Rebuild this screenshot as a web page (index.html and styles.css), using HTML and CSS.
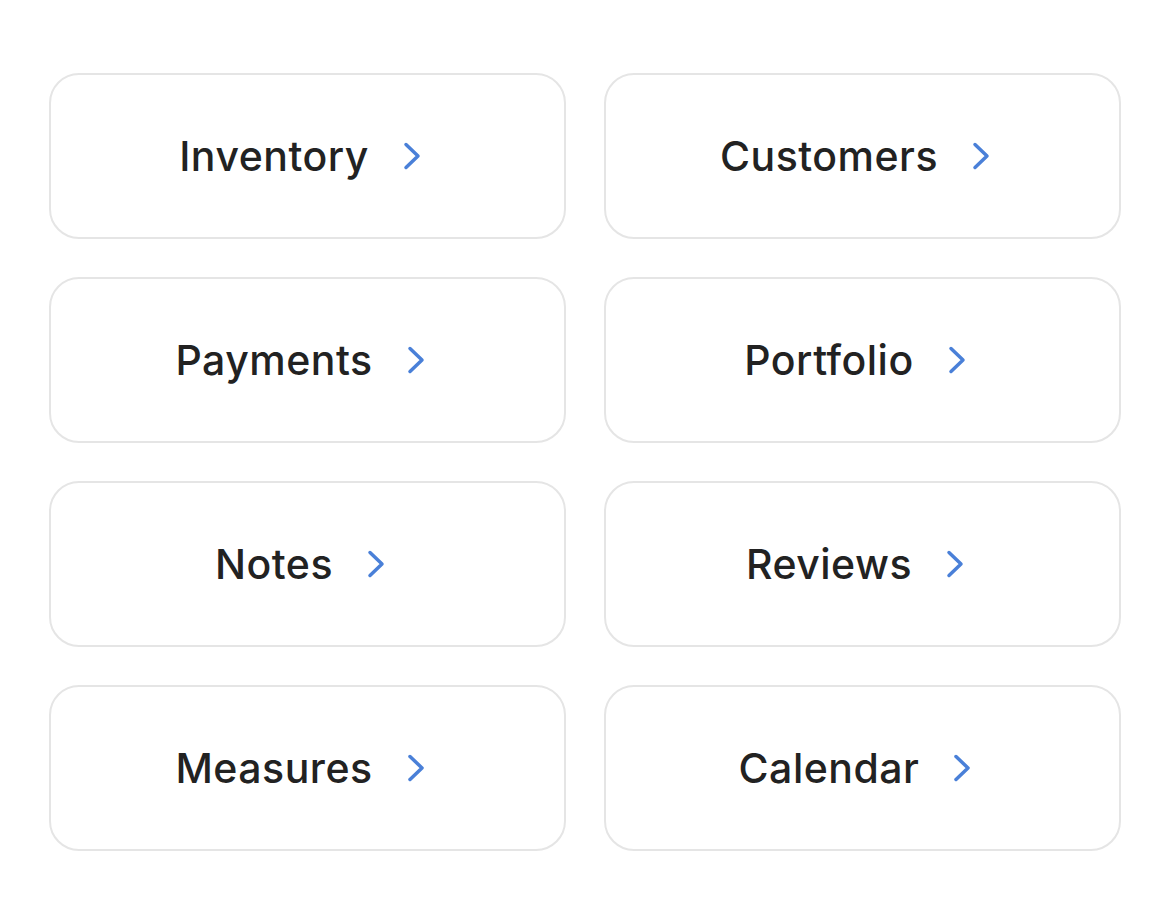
FILE: index.html
```html
<!DOCTYPE html>
<html>
<head>
<meta charset="utf-8">
<link rel="stylesheet" href="styles.css">
</head>
<body>
<div class="grid">
  <a class="card"><span class="label">Inventory</span><svg class="chev" viewBox="0 0 40 40"><path d="M10 8.5 L22 20 L10 31.5"/></svg></a>
  <a class="card"><span class="label">Customers</span><svg class="chev" viewBox="0 0 40 40"><path d="M10 8.5 L22 20 L10 31.5"/></svg></a>
  <a class="card"><span class="label">Payments</span><svg class="chev" viewBox="0 0 40 40"><path d="M10 8.5 L22 20 L10 31.5"/></svg></a>
  <a class="card"><span class="label">Portfolio</span><svg class="chev" viewBox="0 0 40 40"><path d="M10 8.5 L22 20 L10 31.5"/></svg></a>
  <a class="card"><span class="label">Notes</span><svg class="chev" viewBox="0 0 40 40"><path d="M10 8.5 L22 20 L10 31.5"/></svg></a>
  <a class="card"><span class="label">Reviews</span><svg class="chev" viewBox="0 0 40 40"><path d="M10 8.5 L22 20 L10 31.5"/></svg></a>
  <a class="card"><span class="label">Measures</span><svg class="chev" viewBox="0 0 40 40"><path d="M10 8.5 L22 20 L10 31.5"/></svg></a>
  <a class="card"><span class="label">Calendar</span><svg class="chev" viewBox="0 0 40 40"><path d="M10 8.5 L22 20 L10 31.5"/></svg></a>
</div>
</body>
</html>
```
FILE: styles.css
```css
html, body {
  margin: 0;
  padding: 0;
  background: #ffffff;
}
body {
  font-family: Inter, "Noto Sans", sans-serif;
}
.grid {
  display: grid;
  grid-template-columns: 517px 517px;
  grid-auto-rows: 166px;
  column-gap: 38px;
  row-gap: 38px;
  padding: 73px 49px 0 49px;
}
.card {
  box-sizing: border-box;
  border: 2px solid #e5e5e5;
  border-radius: 30px;
  display: flex;
  align-items: center;
  justify-content: center;
  gap: 27px;
  text-decoration: none;
  color: #222222;
}
.label {
  font-size: 41px;
  font-weight: 450;
  letter-spacing: 0.5px;
}
.chev {
  width: 40px;
  height: 40px;
  flex: none;
}
.chev path {
  fill: none;
  stroke: #4a80d8;
  stroke-width: 3.5;
  stroke-linecap: round;
  stroke-linejoin: round;
}
```
